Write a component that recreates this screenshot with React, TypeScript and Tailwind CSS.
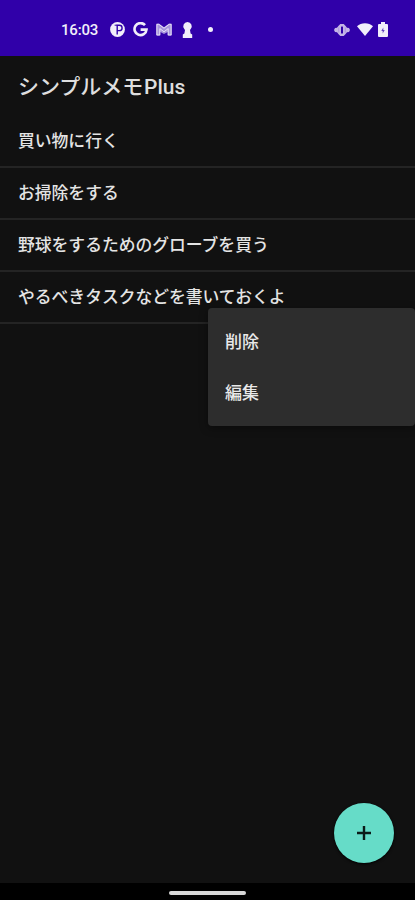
const memos = [
  '買い物に行く',
  'お掃除をする',
  '野球をするためのグローブを買う',
  'やるべきタスクなどを書いておくよ',
];

function StatusBar() {
  return (
    <header className="flex h-14 shrink-0 items-center bg-[#3000a9] pt-[3px] text-[#f1eefa]">
      <span className="ml-[61px] w-[37px] whitespace-nowrap pt-[2px] text-[15px] leading-none font-medium tracking-[-0.2px]">16:03</span>
      <svg className="ml-3 size-[15px]" viewBox="0 0 15 15">
        <circle cx="7.5" cy="7.5" r="7.4" fill="currentColor" />
        <path d="M7.2 12.6V3.2h2.2a2.7 2.7 0 0 1 0 5.4H7.2" fill="none" stroke="#3000a9" strokeWidth="1.4" />
        <path d="M4.6 3.2h2.6" stroke="#3000a9" strokeWidth="1" />
      </svg>
      <svg className="ml-2 size-[15px]" viewBox="0 0 15 15" fill="none" stroke="currentColor" strokeWidth="2.6">
        <path d="M12 3.1A6 6 0 1 0 13.5 7.6H7.6" />
      </svg>
      <svg className="ml-2 h-[13px] w-4" viewBox="0 0 16 13">
        <path d="M.3 12.5V.7h3L8 4.3 12.7.7h3v11.8h-4V9L8 11 4.3 9v3.5Z" fill="#a795dc" />
        <path d="M.9 12V1.3h1.9L8 5.2l5.2-3.9h1.9V12h-2.9V5.6L8 8.8 3.8 5.6V12Z" fill="none" stroke="#eeeafa" strokeWidth=".9" />
      </svg>
      <svg className="ml-[10px] h-4 w-[11px]" viewBox="0 0 11 16" fill="currentColor">
        <path d="M5.5 0a4.3 4.3 0 0 1 3.2 7.1L8 8l.6 3.5 1.6 1V16H.8v-3.5l1.6-1L3 8l-.7-.9A4.3 4.3 0 0 1 5.5 0Z" />
      </svg>
      <span className="ml-[15px] size-[5px] rounded-full bg-current" />
      <svg className="ml-auto h-3 w-4" viewBox="0 0 16 12">
        <path d="M0 6l1-2 2-.3 1.6-2L6.3 0h3.4l1.7 1.7 1.6 2 2 .3 1 2-1 2-2 .3-1.6 2L9.7 12H6.3l-1.7-1.7-1.6-2L1 8Z" fill="#c4b5e6" />
        <rect x="7" y="2.5" width="2" height="7" rx=".5" fill="#3000a9" />
        <path d="M4.7 3.5v5M11.3 3.5v5" stroke="#a48cda" strokeWidth=".8" />
      </svg>
      <svg className="ml-[7px] h-[13px] w-4" viewBox="0 0 16 13" fill="currentColor">
        <path d="M0 3.2C4-.7 12-.7 16 3.2L8 13Z" />
      </svg>
      <svg className="mr-[27px] ml-[5px] h-[15px] w-[10px]" viewBox="0 0 10 15">
        <path d="M3 0h4v2h2q1 0 1 1v11q0 1-1 1H1q-1 0-1-1V3q0-1 1-1h2Z" fill="currentColor" />
        <path d="M5.3 5.5L3.3 9h1.4v2.5L6.7 8H5.3Z" fill="#6041bd" />
      </svg>
    </header>
  );
}

function ContextMenu() {
  return (
    <div className="absolute top-[308px] right-0 flex h-[118px] w-[207px] flex-col rounded-[4px] bg-[#2d2d2d] pt-[9px] pl-[17px] shadow-[0_2px_8px_#00000066]">
      <button className="h-[51px] text-left text-[17px] font-medium text-[#e9e9e9]">削除</button>
      <button className="h-[51px] text-left text-[17px] font-medium text-[#e9e9e9]">編集</button>
    </div>
  );
}

export default function App() {
  return (
    <div className="relative flex h-[900px] w-full flex-col overflow-hidden bg-[#111111] font-[Roboto,'Noto_Sans_CJK_JP',sans-serif]">
      <StatusBar />
      <h1 className="flex h-[60px] items-center pt-[3px] pl-[18px] text-[21px] leading-none font-medium text-[#dedede]">
        <span className="w-[126px] whitespace-nowrap">シンプルメモ</span>
        <span>Plus</span>
      </h1>
      <ul>
        {memos.map((memo) => (
          <li key={memo} className="flex h-[52px] items-center border-b-2 border-[#242424] pl-[18px] text-[16.8px] leading-none font-medium whitespace-nowrap text-[#e4e4e4]">
            {memo}
          </li>
        ))}
      </ul>
      <footer className="mt-auto flex h-[17px] items-center justify-center bg-black pt-[2px]">
        <span className="h-1 w-[77px] rounded-full bg-[#d8d8d8]" />
      </footer>
      <ContextMenu />
      <button aria-label="追加" className="absolute top-[803px] right-[21px] flex size-[60px] items-center justify-center rounded-full bg-[#66dcc8] shadow-[0_1px_3px_#000]">
        <svg className="size-[14px]" viewBox="0 0 14 14" stroke="#0b1c19" strokeWidth="2.4">
          <path d="M7 0v14M0 7h14" />
        </svg>
      </button>
    </div>
  );
}
